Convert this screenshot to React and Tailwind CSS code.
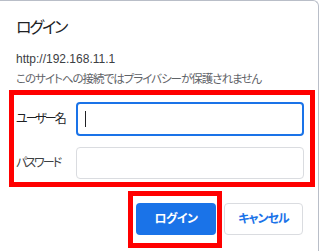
import React from "react";

const App = () => {
  return (
    <div
      className="w-[321px] h-[251px] bg-white overflow-hidden [font-feature-settings:'palt']"
      style={{ fontFamily: '"Liberation Sans", "Noto Sans CJK JP", sans-serif' }}
    >
      <div className="w-[319px] h-[251px] border-t border-r border-[#b9bec8] rounded-tr-[6px] bg-white">
        <div className="pl-4 pt-[17px] text-[16px] leading-[20px] tracking-[-2px] text-[#202124]">ログイン</div>
        <div className="pl-4 mt-[12px] text-[12px] leading-[18px] text-[#3c4043]">http://192.168.11.1</div>
        <div className="pl-4 mt-[2px] text-[11.5px] leading-[18px] tracking-[-1px] text-[#5f6368]">
          このサイトへの接続ではプライバシーが保護されません
        </div>

        <div className="ml-[9px] mt-[2px] w-[306px] h-[97px] border-[5px] border-[#ff0000] pr-[6px] pt-[7px]">
          <div className="flex items-center">
            <span className="w-[62px] pl-[2px] text-[12px] tracking-[-2px] text-[#202124]">ユーザー名</span>
            <div className="w-[228px] h-[34px] rounded-[4px] border-2 border-[#1a73e8] flex items-center pl-[7px]">
              <span className="w-[1px] h-[16px] bg-[#202124]" />
            </div>
          </div>
          <div className="flex items-center mt-[11px]">
            <span className="w-[62px] pl-[2px] text-[12px] tracking-[-2px] text-[#3c4043]">パスワード</span>
            <div className="w-[228px] h-[32px] rounded-[4px] border border-[#dadce0]" />
          </div>
        </div>

        <div className="flex items-start mt-[4px]">
          <div className="ml-[128px] w-[94px] h-[57px] border-[5px] border-[#ff0000] pl-[3px] pt-[7px]">
            <button className="w-[80px] h-[32px] rounded-[4px] bg-[#1a73e8] text-white text-[12px] tracking-[-0.5px] font-bold">
              ログイン
            </button>
          </div>
          <button className="ml-[2px] mt-[12px] w-[79px] h-[32px] rounded-[4px] border border-[#dadce0] bg-white text-[#1a73e8] text-[12px] tracking-[-1px] font-bold">
            キャンセル
          </button>
        </div>
      </div>
    </div>
  );
};

export default App;
